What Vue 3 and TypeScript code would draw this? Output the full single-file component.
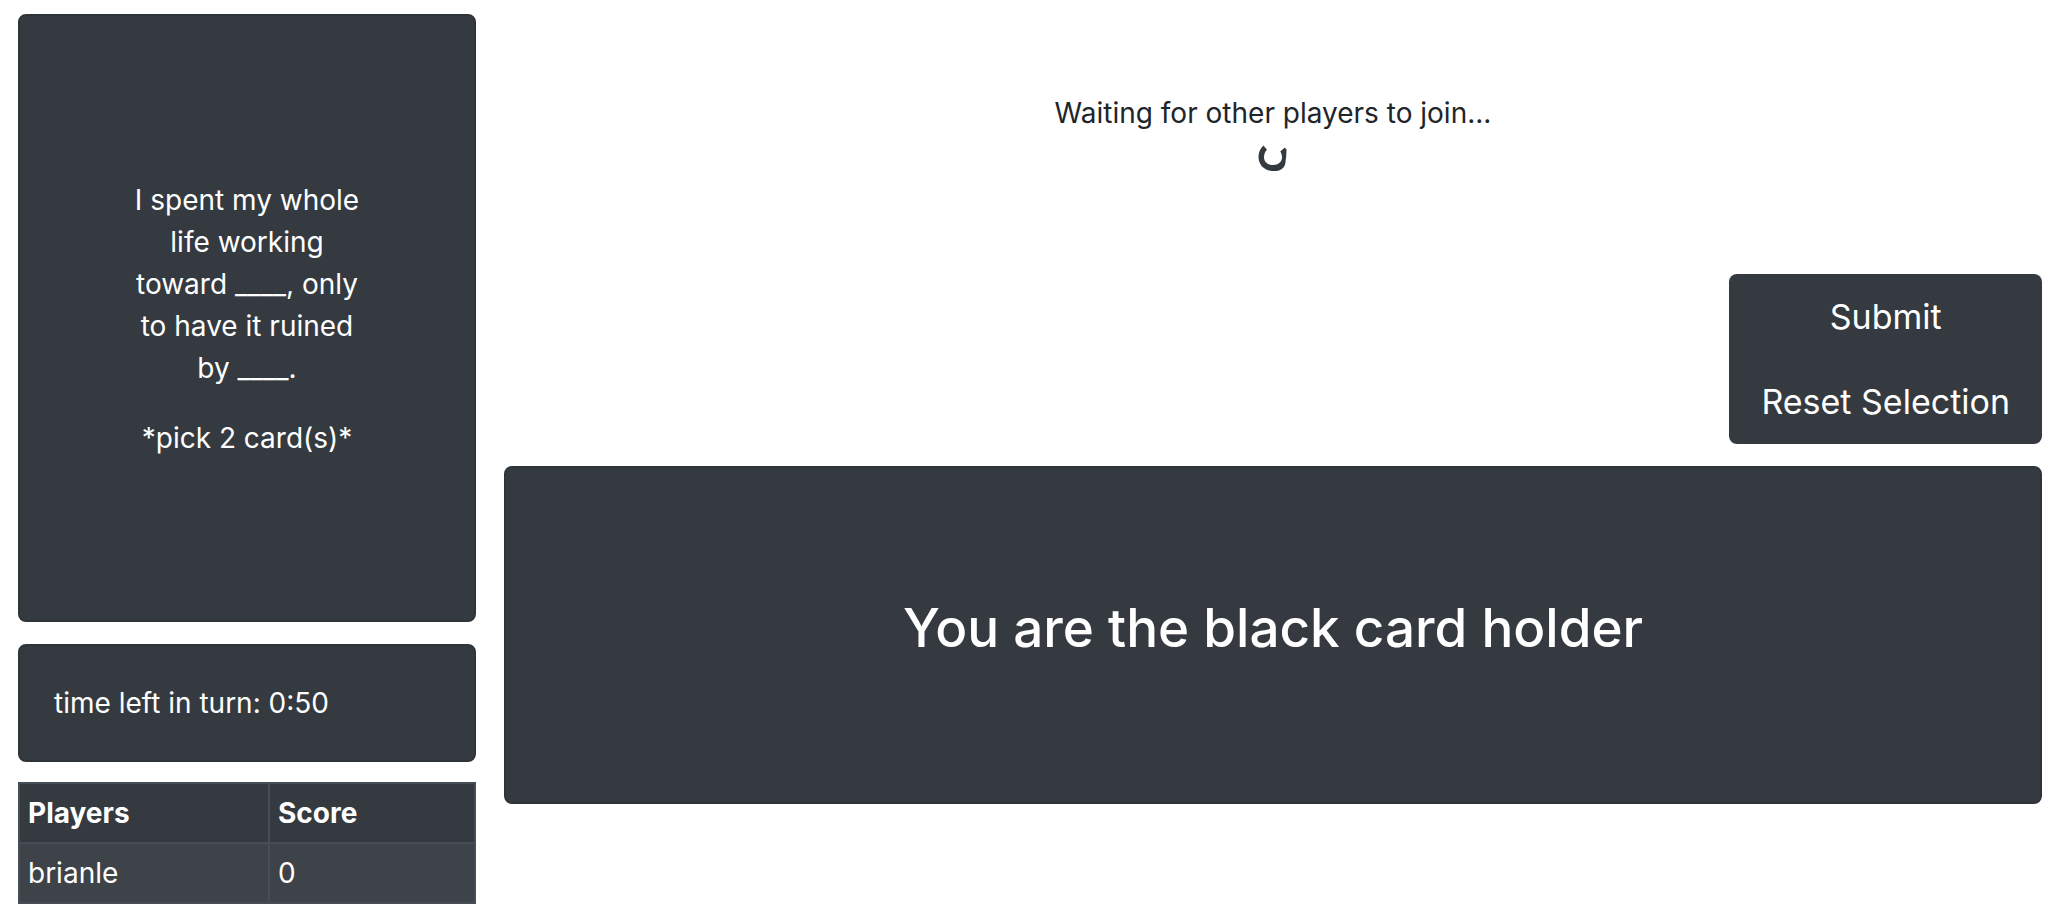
<script setup lang="ts">
import { ref } from 'vue'

interface Player {
  name: string
  score: number
}

const prompt = 'I spent my whole life working toward ____, only to have it ruined by ____.'
const pickCount = 2
const timeLeft = '0:50'
const players = ref<Player[]>([{ name: 'brianle', score: 0 }])
</script>

<template>
  <div class="game">
    <aside class="side">
      <section class="panel black-card">
        <p>{{ prompt }}</p>
        <p>*pick {{ pickCount }} card(s)*</p>
      </section>
      <section class="panel timer">time left in turn: {{ timeLeft }}</section>
      <table class="scores">
        <thead>
          <tr>
            <th scope="col">Players</th>
            <th scope="col">Score</th>
          </tr>
        </thead>
        <tbody>
          <tr v-for="player in players" :key="player.name">
            <td>{{ player.name }}</td>
            <td>{{ player.score }}</td>
          </tr>
        </tbody>
      </table>
    </aside>
    <main class="board">
      <div class="status" role="status">
        <span>Waiting for other players to join...</span>
        <svg class="spinner" viewBox="0 0 30 28" aria-hidden="true">
          <path
            d="M5.5 1.5 L9 5.8 C7 7.5 6 10 6 13.2 C6 17.8 9.5 21 15 21 C20.5 21 24 17.8 24 13.5 C24 11 23.4 9 22.3 7.5 L26.5 3.8 L28.4 5 C28.6 9 28.2 13 27.6 17 C27.3 20 27 21.5 25.5 23.5 C23 26.5 19.5 27 15.5 27 C6 27 0.5 20.5 0.5 13 C0.5 8.5 2 4.5 5.5 1.5 Z"
          />
        </svg>
      </div>
      <div class="actions">
        <button type="button">Submit</button>
        <button type="button">Reset Selection</button>
      </div>
      <section class="panel hand">
        <h1>You are the black card holder</h1>
      </section>
    </main>
  </div>
</template>

<style>
body {
  margin: 0;
  background: #fff;
}
</style>

<style scoped>
.game {
  display: grid;
  grid-template-columns: 458px minmax(0, 1fr);
  column-gap: 28px;
  align-items: start;
  padding: 14px 18px;
  color: #212529;
  font-family: Inter, "Liberation Sans", sans-serif;
  font-size: 28px;
  line-height: 42px;
}

.side,
.board {
  display: flex;
  flex-direction: column;
}

.panel {
  box-sizing: border-box;
  border: 2px solid #2f3438;
  border-radius: 8px;
  background: #343a40;
  color: #fff;
}

.black-card {
  display: flex;
  flex-direction: column;
  justify-content: center;
  gap: 28px;
  min-height: 608px;
  padding: 2px 110px 0;
  text-align: center;
}

.black-card p {
  margin: 0;
}

.timer {
  margin-top: 22px;
  padding: 36px 34px;
}

.scores {
  width: 100%;
  margin-top: 20px;
  border-collapse: collapse;
  background: #343a40;
  color: #fff;
}

.scores th,
.scores td {
  padding: 8px;
  border: 2px solid #454d55;
  text-align: left;
}

.scores th {
  font-weight: 700;
}

.scores th:first-child {
  box-sizing: border-box;
  width: 250px;
}

.scores tbody tr {
  background: #3e4349;
}

.status {
  display: flex;
  flex-direction: column;
  align-items: center;
  gap: 10px;
  min-height: 182px;
  padding-top: 78px;
}

.spinner {
  width: 30px;
  height: 28px;
  fill: #343a40;
}

.actions {
  display: flex;
  flex-direction: column;
  align-self: flex-end;
  overflow: hidden;
  border-radius: 8px;
  background: #343a40;
}

.actions button {
  padding: 16px 32px;
  border: 0;
  background: transparent;
  color: #fff;
  font-family: inherit;
  font-size: 34px;
  line-height: 53px;
}

.hand {
  display: flex;
  align-items: center;
  justify-content: center;
  min-height: 338px;
  margin-top: 22px;
}

.hand h1 {
  margin: 0 0 14px;
  font-size: 53px;
  font-weight: 500;
  line-height: 68px;
}
</style>
